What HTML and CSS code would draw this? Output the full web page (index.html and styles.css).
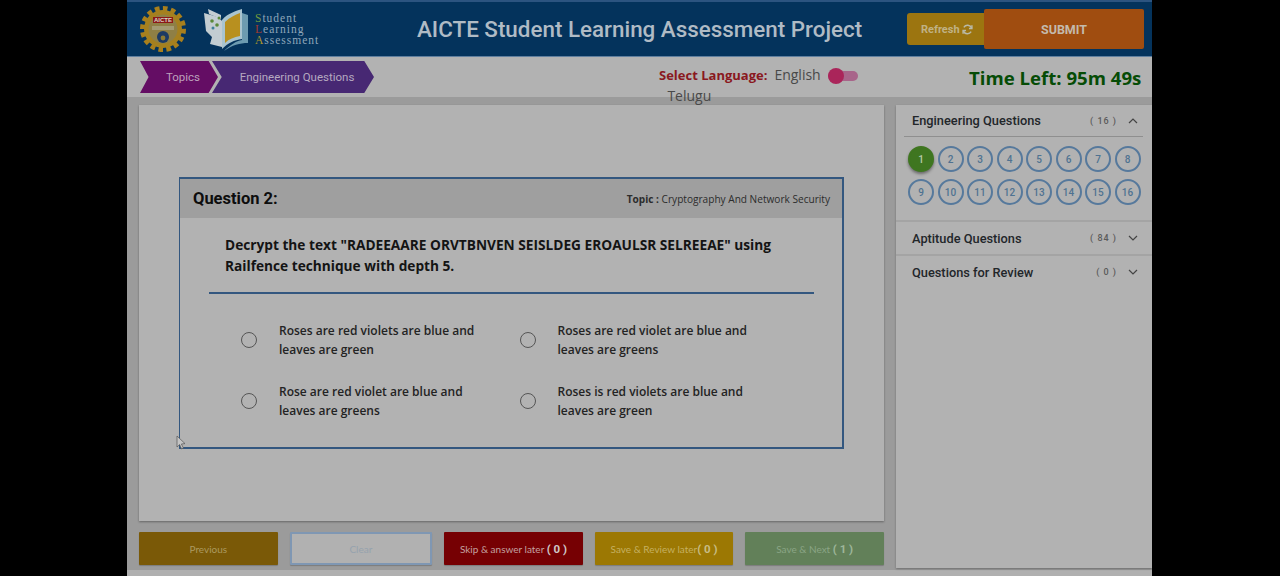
FILE: index.html
```html
<!DOCTYPE html>
<html lang="en">
<head>
    <meta charset="UTF-8">
    <meta name="viewport" content="width=device-width, initial-scale=1.0">
    <title>AICTE Student Learning Assessment Project</title>
    <link rel="stylesheet" href="styles.css">
</head>
<body>
    <div class="app">
        <!-- Cabecera -->
        <header class="top-bar">
            <div class="logos">
                <svg class="logo-aicte" width="48" height="48" viewBox="0 0 48 48">
                    <circle cx="24" cy="24" r="19.5" fill="none" stroke="#a97f1c" stroke-width="7" stroke-dasharray="4.4 3.2"/>
                    <circle cx="24" cy="24" r="19" fill="#a5801f"/>
                    <circle cx="24" cy="24" r="14.5" fill="#8f7f45"/>
                    <rect x="14" y="12" width="20" height="6" fill="#8c1818"/>
                    <text x="24" y="17" class="logo-aicte-text">AICTE</text>
                    <rect x="13" y="21" width="22" height="4" fill="#a39a72"/>
                    <circle cx="24" cy="32" r="6" fill="#1d3a63"/>
                    <circle cx="24" cy="33" r="2.4" fill="#8d7a33"/>
                </svg>
                <svg class="logo-book" width="48" height="44" viewBox="0 0 48 44">
                    <path d="M2 6 L16 10 L20 14 L20 40 L8 37 L10 30 L4 24 Z" fill="#c3cdd2"/>
                    <path d="M6 2 L19 8 L19 12 L7 7 Z" fill="#c3cdd2"/>
                    <path d="M20 13 C26 6 34 4 40 2 L40 32 C32 33 26 36 20 42 Z" fill="#a9c4cf"/>
                    <path d="M23 15 C28 10 33 8 38 6 L38 29 C32 30 27 32 23 36 Z" fill="#b8901f"/>
                    <path d="M40 6 L46 8 L46 36 C38 36 30 38 22 44 C28 38 34 34 40 33 Z" fill="#6d9bb0"/>
                    <circle cx="10" cy="14" r="1.8" fill="#5b8a3a"/>
                    <circle cx="15" cy="18" r="1.8" fill="#5b8a3a"/>
                    <circle cx="11" cy="21" r="1.5" fill="#3f7f9a"/>
                    <circle cx="17" cy="11" r="1.5" fill="#5b8a3a"/>
                </svg>
                <div class="logo-words">
                    <span><b class="c-green">S</b>tudent</span>
                    <span><b class="c-red">L</b>earning</span>
                    <span><b class="c-yellow">A</b>ssessment</span>
                </div>
            </div>
            <h1>AICTE Student Learning Assessment Project</h1>
            <div class="top-actions">
                <button class="btn-refresh">Refresh
                    <svg width="11" height="11" viewBox="0 0 12 12" fill="none" stroke="#b9b9a6" stroke-width="1.6">
                        <path d="M10.5 4.5 A4.8 4.8 0 0 0 2 3.6"/>
                        <path d="M1.5 7.5 A4.8 4.8 0 0 0 10 8.4"/>
                        <path d="M10.8 1.4 V4.8 H7.6" />
                        <path d="M1.2 10.6 V7.2 H4.4" />
                    </svg>
                </button>
                <button class="btn-submit">SUBMIT</button>
            </div>
        </header>

        <!-- Barra de navegacion -->
        <div class="sub-bar">
            <nav class="crumbs">
                <a class="crumb crumb-topics">Topics</a>
                <a class="crumb crumb-section">Engineering Questions</a>
            </nav>
            <div class="language">
                <span class="language-label">Select Language:</span>
                <div class="language-options">
                    <span>English</span>
                    <span class="language-other">Telugu</span>
                </div>
                <span class="toggle"><i></i></span>
            </div>
            <div class="timer">Time Left: 95m 49s</div>
        </div>

        <div class="content">
            <main class="left-col">
                <section class="question-panel">
                    <article class="question-card">
                        <div class="question-head">
                            <h2>Question 2:</h2>
                            <p><b>Topic :</b> Cryptography And Network Security</p>
                        </div>
                        <p class="question-text">Decrypt the text "RADEEAARE ORVTBNVEN SEISLDEG EROAULSR SELREEAE" using Railfence technique with depth 5.</p>
                        <hr class="question-rule">
                        <div class="options">
                            <label class="option"><span class="radio"></span><span class="option-text">Roses are red violets are blue and leaves are green</span></label>
                            <label class="option"><span class="radio"></span><span class="option-text">Roses are red violet are blue and leaves are greens</span></label>
                            <label class="option"><span class="radio"></span><span class="option-text">Rose are red violet are blue and leaves are greens</span></label>
                            <label class="option"><span class="radio"></span><span class="option-text">Roses is red violets are blue and leaves are green</span></label>
                        </div>
                        <svg class="cursor" width="10" height="15" viewBox="0 0 10 15">
                            <path d="M1 1 L1 12 L3.6 9.6 L5.6 14 L7.4 13 L5.4 9 L9 8.6 Z" fill="#c4c4c4" stroke="#555" stroke-width="0.7"/>
                        </svg>
                    </article>
                </section>
                <div class="footer-actions">
                    <button class="act act-prev">Previous</button>
                    <button class="act act-clear">Clear</button>
                    <button class="act act-skip">Skip &amp; answer later <b>( 0 )</b></button>
                    <button class="act act-review">Save &amp; Review later<b>( 0 )</b></button>
                    <button class="act act-next">Save &amp; Next <b>( 1 )</b></button>
                </div>
            </main>

            <aside class="side-panel">
                <div class="group group-open">
                    <div class="group-title">
                        <span>Engineering Questions</span>
                        <em>( 16 )</em>
                        <svg width="10" height="6" viewBox="0 0 10 6" fill="none" stroke="#444" stroke-width="1.2"><path d="M1 5 L5 1 L9 5"/></svg>
                    </div>
                    <div class="numbers">
                        <span class="num num-current">1</span>
                        <span class="num">2</span>
                        <span class="num">3</span>
                        <span class="num">4</span>
                        <span class="num">5</span>
                        <span class="num">6</span>
                        <span class="num">7</span>
                        <span class="num">8</span>
                        <span class="num">9</span>
                        <span class="num">10</span>
                        <span class="num">11</span>
                        <span class="num">12</span>
                        <span class="num">13</span>
                        <span class="num">14</span>
                        <span class="num">15</span>
                        <span class="num">16</span>
                    </div>
                </div>
                <div class="group">
                    <div class="group-title">
                        <span>Aptitude Questions</span>
                        <em>( 84 )</em>
                        <svg width="10" height="6" viewBox="0 0 10 6" fill="none" stroke="#444" stroke-width="1.2"><path d="M1 1 L5 5 L9 1"/></svg>
                    </div>
                </div>
                <div class="group">
                    <div class="group-title">
                        <span>Questions for Review</span>
                        <em>( 0 )</em>
                        <svg width="10" height="6" viewBox="0 0 10 6" fill="none" stroke="#444" stroke-width="1.2"><path d="M1 1 L5 5 L9 1"/></svg>
                    </div>
                </div>
            </aside>
        </div>
    </div>
</body>
</html>
```

FILE: styles.css
```css
/* Estilos generales */
html, body {
    height: 100%;
    overflow: hidden;
}

body {
    margin: 0;
    background-color: #000;
    font-family: Roboto, "Liberation Sans", sans-serif;
}

.app {
    width: 1025px;
    height: 576px;
    margin-left: 127px;
    display: flex;
    flex-direction: column;
    background-color: #b0b0b0;
    overflow: hidden;
}

button {
    font-family: inherit;
    cursor: pointer;
}

/* Cabecera */
.top-bar {
    height: 57px;
    flex: none;
    box-sizing: border-box;
    border-top: 2px solid #2c5480;
    border-bottom: 1px solid #5f7f9f;
    background-color: #04335c;
    display: flex;
    align-items: center;
}

.logos {
    display: flex;
    align-items: center;
    padding-left: 12px;
    width: 258px;
}

.logo-aicte-text {
    font-family: "Liberation Sans", sans-serif;
    font-size: 6px;
    font-weight: 700;
    fill: #d8d8c8;
    text-anchor: middle;
}

.logo-book {
    margin-left: 15px;
}

.logo-words {
    margin-left: 5px;
    display: flex;
    flex-direction: column;
    font-family: "Liberation Serif", serif;
    font-size: 11.5px;
    line-height: 11px;
    letter-spacing: 1px;
    color: #8fa6ba;
    white-space: nowrap;
}

.logo-words b {
    font-weight: 400;
}

.c-green {
    color: #6f9a3c;
}

.c-red {
    color: #a33a2c;
}

.c-yellow {
    color: #b59a2a;
}

.top-bar h1 {
    margin: 0 0 0 20px;
    font-size: 22.4px;
    font-weight: 500;
    color: #b0bbc5;
    white-space: nowrap;
}

.top-actions {
    margin-left: auto;
    margin-right: 8px;
    display: flex;
    align-items: center;
}

.btn-refresh {
    width: 80px;
    height: 32px;
    border: none;
    border-radius: 3px;
    background-color: #9c7510;
    color: #c0b285;
    font-size: 11px;
    font-weight: 700;
    text-align: left;
    padding-left: 14px;
    margin-right: -3px;
    white-space: nowrap;
}

.btn-refresh svg {
    vertical-align: -2px;
}

.btn-submit {
    position: relative;
    width: 160px;
    height: 40px;
    border: none;
    border-radius: 2px;
    background-color: #a04d10;
    color: #c4baac;
    font-size: 12.5px;
    font-weight: 700;
}

/* Barra de navegacion */
.sub-bar {
    height: 40px;
    flex: none;
    display: flex;
    align-items: center;
    background-color: #b2b2b2;
}

.crumbs {
    display: flex;
    margin-left: 13px;
    width: 519px;
}

.crumb {
    height: 32px;
    display: flex;
    align-items: center;
    justify-content: center;
    font-size: 11.5px;
    box-sizing: border-box;
    color: #b5a8c0;
    background-color: #640d64;
}

.crumb-topics {
    width: 78px;
    padding-left: 8px;
    clip-path: polygon(0 0, 88% 0, 100% 50%, 88% 100%, 0 100%, 11% 50%);
    color: #bda2bd;
}

.crumb-section {
    width: 162px;
    margin-left: -6px;
    background-color: #472873;
    clip-path: polygon(0 0, 94% 0, 100% 50%, 94% 100%, 0 100%, 6% 50%);
    padding-left: 8px;
}

.language {
    display: flex;
    align-items: flex-start;
    height: 40px;
    padding-top: 10px;
    box-sizing: border-box;
    width: 309px;
    font-family: "Open Sans", sans-serif;
}

.language-label {
    font-size: 13px;
    font-weight: 700;
    color: #8a1820;
    line-height: 16px;
    white-space: nowrap;
}

.language-options {
    margin-left: 7px;
    display: flex;
    flex-direction: column;
    font-size: 14px;
    line-height: 16px;
    color: #494949;
    height: 16px;
    width: 54px;
}

/* se sale de la barra, por encima del contenido */
.language-other {
    position: relative;
    z-index: 1;
    margin-top: 5px;
    margin-left: -107px;
    width: 60px;
}

.toggle {
    position: relative;
    width: 30px;
    height: 10px;
    margin-top: 4px;
    border-radius: 5px;
    background-color: #a8658a;
}

.toggle i {
    position: absolute;
    left: 0;
    top: -3px;
    width: 16px;
    height: 16px;
    border-radius: 50%;
    background-color: #aa255a;
}

.timer {
    margin-left: 1px;
    font-family: "Open Sans", sans-serif;
    font-size: 18.6px;
    font-weight: 700;
    color: #064c06;
    white-space: nowrap;
}

/* Contenido */
.content {
    flex: 1;
    display: flex;
    align-items: flex-start;
    background-color: #9b9b9b;
    padding-top: 8px;
    padding-left: 12px;
    gap: 12px;
    min-height: 0;
    border-bottom: 6px solid #b0b0b0;
}

.left-col {
    width: 745px;
    flex: none;
}

.question-panel {
    height: 416px;
    display: flex;
    align-items: center;
    background-color: #b2b2b2;
    box-shadow: 0 1px 2px rgba(0, 0, 0, 0.35);
    padding-left: 40px;
}

.question-card {
    position: relative;
    width: 665px;
    height: 272px;
    box-sizing: border-box;
    border: 2px solid #33577f;
    border-left-width: 1.5px;
}

.question-head {
    height: 39px;
    display: flex;
    align-items: center;
    justify-content: space-between;
    padding: 0 12px 0 13px;
    background-color: #9f9f9f;
}

.question-head h2 {
    margin: 0;
    font-size: 16.5px;
    font-weight: 700;
    color: #0d0d0d;
}

.question-head p {
    margin: 0;
    font-size: 10.1px;
    color: #2c2c2c;
    font-family: "Open Sans", sans-serif;
}

.question-text {
    margin: 16px 60px 0 45px;
    font-family: "Open Sans", sans-serif;
    font-size: 13.7px;
    font-weight: 700;
    line-height: 21px;
    color: #141414;
}

.question-rule {
    margin: 16px 28px 0 29px;
    border: none;
    height: 2px;
    background-color: #33577f;
}

.options {
    display: grid;
    grid-template-columns: 278.5px 240px;
    row-gap: 22px;
    margin: 26.5px 0 0 61px;
}

.option {
    display: flex;
    align-items: center;
    gap: 22px;
    font-family: "Open Sans", sans-serif;
    font-size: 12px;
    font-weight: 600;
    line-height: 19.5px;
    color: #232323;
}

.option-text {
    max-width: 198px;
}

.radio {
    flex: none;
    width: 16px;
    height: 16px;
    box-sizing: border-box;
    border: 1.5px solid #555;
    border-radius: 50%;
}

.cursor {
    position: absolute;
    left: -4px;
    bottom: -3px;
}

/* Botones inferiores */
.footer-actions {
    display: flex;
    gap: 12px;
    margin-top: 11px;
}

.act {
    flex: 1;
    height: 33px;
    border: none;
    border-radius: 1px;
    font-family: Lato, sans-serif;
    font-size: 10px;
    padding: 0;
    white-space: nowrap;
    box-shadow: 0 1px 1px rgba(0, 0, 0, 0.2);
}

.act b {
    font-size: 11.5px;
    font-family: Roboto, sans-serif;
}

.act-prev {
    background-color: #7a5907;
    color: #ab9a60;
}

.act-clear {
    background-color: #b1b1b1;
    border: 2px solid #7f97b3;
    color: #95a2ae;
}

.act-skip {
    background-color: #760003;
    color: #c4a0a0;
}

.act-skip b {
    color: #d0c8c8;
}

.act-review {
    background-color: #9c7803;
    color: #c5b060;
}

.act-review b {
    color: #c8bd84;
}

.act-next {
    background-color: #628059;
    color: #8aa585;
}

.act-next b {
    color: #9db69a;
}

/* Panel lateral */
.side-panel {
    flex: 1;
    height: 463px;
    background-color: #b2b2b2;
    box-shadow: 0 1px 2px rgba(0, 0, 0, 0.3);
}

.group {
    border-bottom: 2px solid #a4a4a4;
    height: 32px;
}

.group-open {
    height: 115px;
}

.group:last-child {
    border-bottom: none;
}

.group-title {
    display: flex;
    align-items: center;
    height: 32px;
    box-sizing: border-box;
    margin: 0 9px 0 8px;
    padding: 0 5px 0 8px;
    font-size: 12.8px;
    font-weight: 500;
    color: #22262a;
}

.group-open .group-title {
    border-bottom: 1px solid #8f8f8f;
    padding-bottom: 0;
}

.group-title span {
    flex: 1;
}

.group-title em {
    font-style: normal;
    font-size: 9px;
    letter-spacing: 1px;
    color: #5a5a5a;
    margin-right: 11px;
}

.numbers {
    display: grid;
    grid-template-columns: repeat(8, 26px);
    column-gap: 3.5px;
    row-gap: 7px;
    padding: 9px 0 0 12px;
}

.num {
    width: 26px;
    height: 26px;
    box-sizing: border-box;
    border: 2px solid #56799c;
    border-radius: 50%;
    display: flex;
    align-items: center;
    justify-content: center;
    font-size: 10px;
    font-weight: 500;
    color: #4f7291;
}

.num-current {
    background-color: #3f7620;
    border-color: #3f7620;
    color: #b8ccaa;
    box-shadow: 0 2px 3px rgba(0, 0, 0, 0.4);
}
```
